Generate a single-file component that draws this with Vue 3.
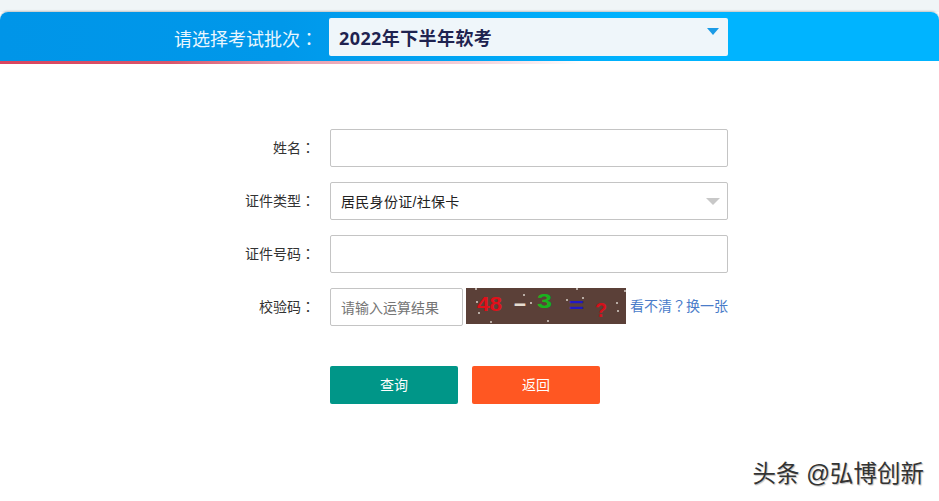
<script setup>
// 验证码上的噪点
const dots = [
  [10, 1], [58, 7], [111, 1], [159, 3], [117, 10], [11, 14], [65, 15],
  [101, 12], [151, 15], [152, 23], [13, 25], [25, 34], [82, 33]
]
</script>

<template>
  <div class="page">
    <div class="top">
      <div class="bar">
        <span class="bar-label">请选择考试批次<span class="punct">：</span></span>
        <div class="batch">
          <span>2022年下半年软考</span>
          <i class="batch-arrow"></i>
        </div>
      </div>
      <div class="bar-line"></div>
    </div>

    <form class="form">
      <div class="row">
        <label class="label">姓名<span class="punct">：</span></label>
        <div class="box"></div>
      </div>
      <div class="row">
        <label class="label">证件类型<span class="punct">：</span></label>
        <div class="box box-select">
          <span>居民身份证/社保卡</span>
          <i class="select-arrow"></i>
        </div>
      </div>
      <div class="row">
        <label class="label">证件号码<span class="punct">：</span></label>
        <div class="box"></div>
      </div>
      <div class="row">
        <label class="label">校验码<span class="punct">：</span></label>
        <div class="code-row">
          <div class="box box-code">请输入运算结果</div>
          <svg class="captcha" width="160" height="36" viewBox="0 0 160 36">
            <rect width="160" height="36" fill="#5b4038" />
            <circle v-for="(d, i) in dots" :key="i" :cx="d[0]" :cy="d[1]" r="1" fill="#d9d0c8" />
            <g font-family="Liberation Sans, sans-serif" font-weight="700" font-size="20">
              <text x="11" y="23" fill="#e0101a" textLength="25" lengthAdjust="spacingAndGlyphs">48</text>
              <text x="47" y="22" fill="#e6dcd0" textLength="14" lengthAdjust="spacingAndGlyphs">-</text>
              <text x="71" y="20" fill="#19b31e" textLength="15" lengthAdjust="spacingAndGlyphs">3</text>
              <text x="103" y="24" fill="#2118c4" textLength="15" lengthAdjust="spacingAndGlyphs">=</text>
              <text x="129" y="29" fill="#d4101a" textLength="12" lengthAdjust="spacingAndGlyphs">?</text>
            </g>
          </svg>
          <a class="refresh">看不清<span class="punct">？</span>换一张</a>
        </div>
      </div>
      <div class="actions">
        <button type="button" class="btn btn-query">查询</button>
        <button type="button" class="btn btn-back">返回</button>
      </div>
    </form>

    <div class="mark">头条 @弘博创新</div>
  </div>
</template>

<style>
html,
body {
  margin: 0;
  background: #fff;
}
</style>

<style scoped>
.page {
  position: relative;
  width: 939px;
  height: 501px;
  overflow: hidden;
  background: #fff;
  font-family: "Liberation Sans", "Noto Sans CJK SC", sans-serif;
}

/* 全角标点居中 */
.punct {
  font-family: "Noto Sans CJK TC", sans-serif;
}

.top {
  padding-top: 12px;
  background: linear-gradient(#f0f5f7 0, #f0f5f7 12px, #fff 12px);
}

.bar {
  display: flex;
  align-items: center;
  height: 49px;
  padding-left: 174px;
  box-sizing: border-box;
  border-radius: 8px 8px 0 0;
  background: linear-gradient(90deg, #0095e8 0%, #0098ea 30%, #00b4ff 70%, #00b4ff 100%);
  box-shadow: 0 -1px 2px rgba(0, 0, 0, 0.2);
}

.bar-label {
  width: 155px;
  margin-top: 2px;
  font-size: 18px;
  color: #e9f6fe;
  white-space: nowrap;
}

.batch {
  position: relative;
  display: flex;
  align-items: center;
  width: 399px;
  height: 38px;
  margin-top: 1px;
  padding-left: 10px;
  box-sizing: border-box;
  border-radius: 2px;
  background: #eff6fa;
  font-family: "Noto Sans", "Noto Sans CJK SC", sans-serif;
  font-size: 18px;
  font-weight: 700;
  letter-spacing: 0.4px;
  color: #1f2350;
}

.batch-arrow {
  position: absolute;
  top: 10px;
  right: 9px;
  border-top: 7px solid #1a9be6;
  border-left: 6px solid transparent;
  border-right: 6px solid transparent;
}

.bar-line {
  height: 3px;
  background: linear-gradient(90deg, #d9455f 0%, #d9556a 18%, #eaa0b0 32%, #f5d0d8 50%, #fff 62%);
}

.form {
  display: flex;
  flex-direction: column;
  padding-top: 65px;
}

.row {
  display: flex;
  align-items: center;
  height: 38px;
  margin-bottom: 15px;
}

.label {
  width: 315px;
  margin-right: 15px;
  padding-bottom: 2px;
  font-size: 14px;
  color: #333;
  text-align: right;
  white-space: nowrap;
}

.box {
  width: 398px;
  height: 38px;
  box-sizing: border-box;
  border: 1px solid #c4c4c4;
  border-radius: 2px;
  background: #fff;
}

.box-select {
  position: relative;
  display: flex;
  align-items: center;
  padding-left: 10px;
  font-size: 14px;
  letter-spacing: 0.3px;
  color: #222;
}

.select-arrow {
  position: absolute;
  top: 15px;
  right: 7px;
  border-top: 7px solid #c8c8c8;
  border-left: 7px solid transparent;
  border-right: 7px solid transparent;
}

.code-row {
  display: flex;
  align-items: flex-start;
  height: 38px;
}

.box-code {
  display: flex;
  align-items: center;
  width: 133px;
  padding-left: 10px;
  font-size: 14px;
  color: #757575;
}

.captcha {
  display: block;
  margin-left: 3px;
}

.refresh {
  margin: 7px 0 0 4px;
  font-size: 14px;
  line-height: 20px;
  color: #4a7cc9;
  white-space: nowrap;
}

.actions {
  display: flex;
  gap: 14px;
  margin: 25px 0 0 330px;
}

.btn {
  width: 128px;
  height: 38px;
  padding: 0 0 2px;
  border: 0;
  border-radius: 2px;
  font-family: inherit;
  font-size: 14px;
  color: #fff;
}

.btn-query {
  background: #009688;
}

.btn-back {
  background: #ff5722;
}

.mark {
  position: absolute;
  right: 15px;
  bottom: 12px;
  font-size: 23.5px;
  line-height: 30px;
  color: #333;
  text-shadow: 1px 1px 1px rgba(0, 0, 0, 0.25);
  white-space: nowrap;
}
</style>
